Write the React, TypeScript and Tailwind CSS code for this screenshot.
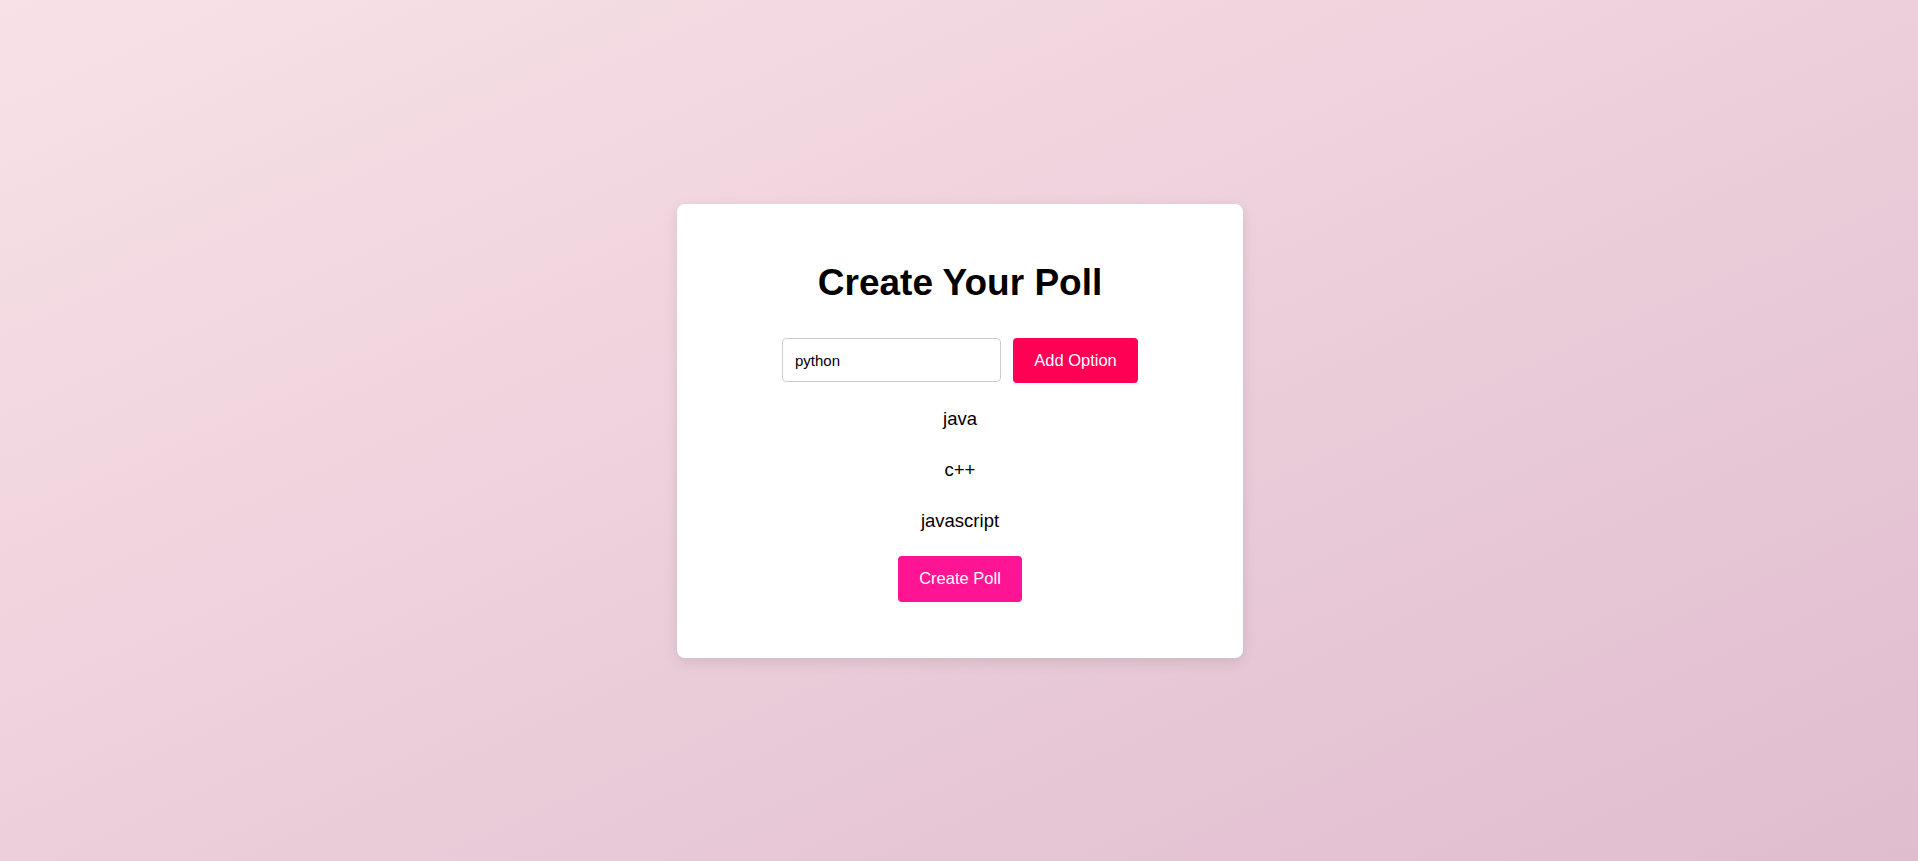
import { useState } from "react";

export default function App() {
	const [value, setValue] = useState("python");
	const options = ["java", "c++", "javascript"];

	return (
		<div className="min-h-screen w-full flex items-center justify-center bg-linear-to-br from-[#f8e2e7] to-[#e0bccf] font-['Liberation_Sans',Arial,sans-serif] text-black">
			<div className="ml-[2px] w-[566px] bg-white rounded-lg shadow-[0_4px_14px_rgba(0,0,0,0.1)] pt-[58px] pb-[56px] flex flex-col items-center">
				<h1 className="text-[37px] leading-[41px] font-bold">Create Your Poll</h1>

				<div className="mt-[35px] flex items-center gap-3">
					<input
						className="w-[219px] h-[44px] border border-[#cccccc] rounded-[4px] pl-[12px] text-[15px] outline-none"
						value={value}
						onChange={(e) => setValue(e.target.value)}
					/>
					<button type="button" className="w-[125px] h-[45px] bg-[#ff0055] text-white text-[16.5px] rounded-[4px]">
						Add Option
					</button>
				</div>

				<ul className="mt-[10px] flex flex-col items-center">
					{options.map((o) => (
						<li key={o} className="h-[51px] leading-[51px] text-[18.5px]">
							{o}
						</li>
					))}
				</ul>

				<button type="button" className="mt-[10px] w-[124px] h-[46px] bg-[#ff1493] text-white text-[16.5px] rounded-[4px]">
					Create Poll
				</button>
			</div>
		</div>
	);
}
